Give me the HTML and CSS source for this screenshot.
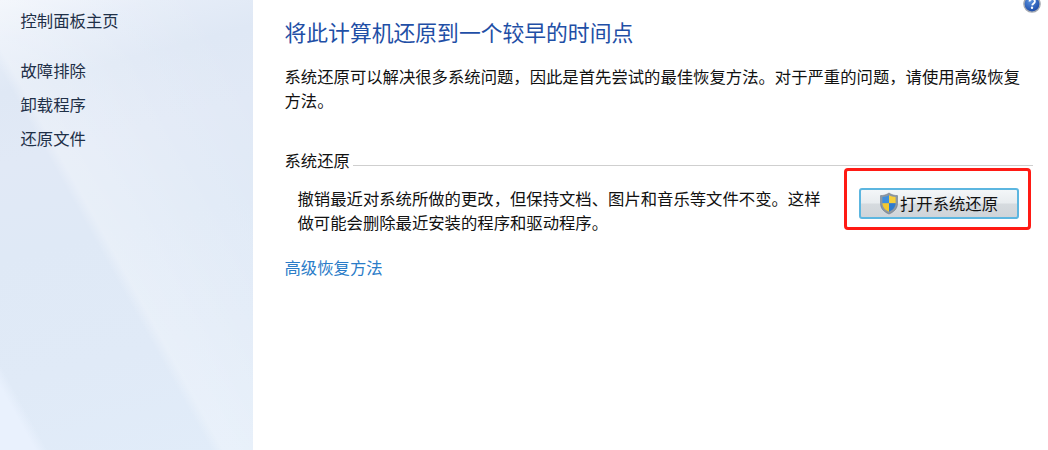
FILE: index.html
```html
<!DOCTYPE html>
<html lang="zh-CN">
<head>
<meta charset="utf-8">
<title>系统还原</title>
<link rel="stylesheet" href="styles.css">
</head>
<body>
<div class="window">
  <nav class="sidebar">
    <a class="side-link side-home">控制面板主页</a>
    <a class="side-link">故障排除</a>
    <a class="side-link">卸载程序</a>
    <a class="side-link">还原文件</a>
  </nav>
  <main class="main">
    <svg class="help" width="18" height="18" viewBox="0 0 20 20" aria-hidden="true">
      <defs>
        <radialGradient id="hg" cx="0.4" cy="0.3" r="0.8">
          <stop offset="0" stop-color="#5b93e0"/>
          <stop offset="1" stop-color="#123f9e"/>
        </radialGradient>
      </defs>
      <circle cx="10" cy="10" r="9" fill="url(#hg)" stroke="#a5aab2" stroke-width="1.6"/>
      <path d="M7.200 7.200C7.400 5.400 8.800 4.600 10.200 4.600C12 4.600 13.200 5.700 13.200 7.200C13.200 9.400 10.400 9.400 10.200 11.600" fill="none" stroke="#fff" stroke-width="2"/>
      <circle cx="10" cy="14.200" r="1.300" fill="#fff"/>
    </svg>
    <h1 class="title">将此计算机还原到一个较早的时间点</h1>
    <p class="intro">系统还原可以解决很多系统问题，因此是首先尝试的最佳恢复方法。对于严重的问题，请使用高级恢复方法。</p>
    <div class="group-head">
      <span class="group-label">系统还原</span>
      <span class="group-rule"></span>
    </div>
    <div class="group-body">
      <p class="group-text">撤销最近对系统所做的更改，但保持文档、图片和音乐等文件不变。这样做可能会删除最近安装的程序和驱动程序。</p>
      <div class="highlight">
        <button class="restore-btn" type="button">
          <svg class="shield" width="20" height="23" viewBox="0 0 20 23" aria-hidden="true">
            <path d="M10 1C7.500 2.800 4.500 3.600 1.500 3.600V11.500C1.500 16.500 5 20 10 22C15 20 18.500 16.500 18.500 11.500V3.600C15.500 3.600 12.500 2.800 10 1Z" fill="#8d97a3" stroke="#6f7a86" stroke-width="0.6"/>
            <path d="M10 3.300V11.300H3.400V4.900C5.800 4.900 8 4.400 10 3.300Z" fill="#3f8fdc"/>
            <path d="M10 3.300V11.300H16.600V4.900C14.200 4.900 12 4.400 10 3.300Z" fill="#f6cf3a"/>
            <path d="M3.400 11.300H10V19.700C6.300 18.200 3.600 15.300 3.400 11.300Z" fill="#f4c92e"/>
            <path d="M16.600 11.300H10V19.700C13.700 18.200 16.400 15.300 16.600 11.300Z" fill="#2e7bcf"/>
          </svg>
          <span>打开系统还原</span>
        </button>
      </div>
    </div>
    <a class="advanced">高级恢复方法</a>
  </main>
</div>
</body>
</html>
```
FILE: styles.css
```css
* {
  box-sizing: border-box;
}

html,
body {
  margin: 0;
  height: 100%;
  background: #fff;
}

body {
  overflow: hidden;
  font-family: "Noto Sans CJK SC", "Liberation Sans", sans-serif;
  font-size: 16.35px;
  color: #111;
}

.window {
  display: flex;
  height: 450px;
}

.sidebar {
  flex: 0 0 253px;
  display: flex;
  flex-direction: column;
  padding: 7px 0 0 20.500px;
  background:
    linear-gradient(61deg, #e9f1fd 0, #e9f1fd 7%, rgba(233,241,253,0) 9.500%),
    linear-gradient(61deg, rgba(255,255,255,0) 0 42%, rgba(255,255,255,0.28) 44.500%, rgba(255,255,255,0.1) 70%, rgba(255,255,255,0) 90%),
    linear-gradient(165deg, #f0f4fb 0, #e6edf8 8%, #dfe8f5 18%, #e1e9f6 32%, #dfe9f6 50%, #e0eaf7 75%, #e1ecf9 100%);
}

.side-link {
  height: 34px;
  line-height: 27px;
  color: #1f3048;
  white-space: nowrap;
}

.side-home {
  height: 50px;
}

.main {
  flex: 1;
  position: relative;
  padding: 17px 15px 0 31.500px;
  min-width: 0;
}

.help {
  position: absolute;
  top: -5px;
  right: 7px;
}

.title {
  margin: 0 0 17px;
  font-size: 21.8px;
  font-weight: 400;
  line-height: 30px;
  color: #1f4fa6;
  white-space: nowrap;
}

.intro {
  margin: 0 0 37px;
  line-height: 24px;
  width: 745px;
}

.group-head {
  display: flex;
  align-items: flex-end;
  height: 23px;
}

.group-label {
  line-height: 23px;
  padding-right: 3px;
}

.group-rule {
  flex: 1;
  height: 1px;
  margin-bottom: 6px;
  background: #cfcfcf;
}

.group-body {
  display: flex;
  align-items: flex-start;
}

.group-text {
  flex: 0 0 540px;
  margin: 14px 0 0 13px;
  padding-right: 13px;
  line-height: 24px;
}

.highlight {
  flex: 0 0 187px;
  height: 62px;
  margin: -4px 0 0 6px;
  border: 3px solid #ff1a14;
  border-radius: 4px;
  padding: 17px 0 0 12px;
}

.restore-btn {
  display: flex;
  align-items: center;
  justify-content: center;
  gap: 1px;
  width: 160px;
  height: 31px;
  padding: 0;
  border: 2px solid #5cb6e0;
  border-radius: 3px;
  background: linear-gradient(180deg, #f3f6f8 0, #e8ecef 48%, #d6dbdf 52%, #cfd4d9 100%);
  font: inherit;
  color: #111;
  line-height: 1;
}

.shield {
  flex: none;
}

.advanced {
  display: block;
  margin-top: 21px;
  line-height: 24px;
  color: #2a7cc8;
}
```
